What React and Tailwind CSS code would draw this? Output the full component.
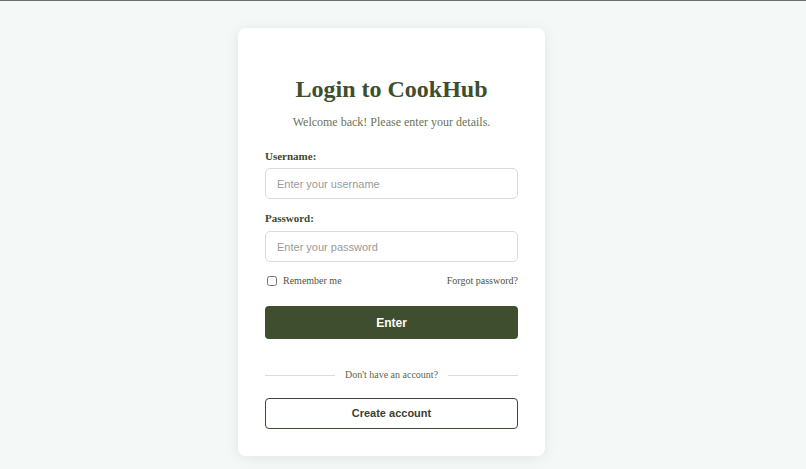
export default function App() {
  return (
    <div
      className="min-h-screen bg-[#f4f8f6] border-t border-[#6b6f6b] flex justify-center pt-[27px] pr-[23px]"
      style={{ fontFamily: '"Liberation Serif", "Times New Roman", serif' }}
    >
      <div className="w-[307px] h-[428px] bg-white rounded-lg shadow-[0_2px_14px_rgba(0,0,0,0.08)] px-[27px] pt-[45px]">
        <h1 className="text-center text-[24px] font-bold text-[#3d4f2c] leading-[32px]">
          Login to CookHub
        </h1>
        <p className="text-center text-[12px] text-[#6a7358] mt-[9px] leading-[16px]">
          Welcome back! Please enter your details.
        </p>

        <form className="mt-[19px]" onSubmit={(e) => e.preventDefault()}>
          <label className="block text-[11px] font-bold text-[#3d4a30] leading-[14px]">
            Username:
          </label>
          <input
            type="text"
            placeholder="Enter your username"
            className="mt-[5px] w-full h-[31px] rounded-[5px] border border-[#dadada] px-[11px] text-[11px] placeholder:text-[#9a9a9a] outline-none"
            style={{ fontFamily: '"Liberation Sans", Arial, sans-serif' }}
          />

          <label className="block mt-[12px] text-[11px] font-bold text-[#3d4a30] leading-[14px]">
            Password:
          </label>
          <input
            type="password"
            placeholder="Enter your password"
            className="mt-[6px] w-full h-[31px] rounded-[5px] border border-[#dadada] px-[11px] text-[11px] placeholder:text-[#9a9a9a] outline-none"
            style={{ fontFamily: '"Liberation Sans", Arial, sans-serif' }}
          />

          <div className="mt-[12px] flex items-center justify-between text-[10px] text-[#4e5644] leading-[14px]">
            <label className="flex items-center gap-[6px] pl-[2px]">
              <input type="checkbox" className="w-[10px] h-[10px] accent-[#3f4e2e]" />
              Remember me
            </label>
            <a href="#" className="text-[#4e5644]">
              Forgot password?
            </a>
          </div>

          <button
            type="submit"
            className="mt-[18px] w-full h-[33px] rounded-[4px] bg-[#3f4e2e] text-white text-[12px] font-bold"
            style={{ fontFamily: '"Liberation Sans", Arial, sans-serif' }}
          >
            Enter
          </button>
        </form>

        <div className="mt-[29px] flex items-center gap-[10px] text-[10px] leading-[14px] text-[#5d6452]">
          <div className="flex-1 h-px bg-[#dcdcdc]" />
          <span>Don't have an account?</span>
          <div className="flex-1 h-px bg-[#dcdcdc]" />
        </div>

        <button
          className="mt-[16px] w-full h-[31px] rounded-[4px] border-[1.5px] border-[#3f4a35] bg-white text-[#3a4030] text-[11px] font-bold"
          style={{ fontFamily: '"Liberation Sans", Arial, sans-serif' }}
        >
          Create account
        </button>
      </div>
    </div>
  );
}
